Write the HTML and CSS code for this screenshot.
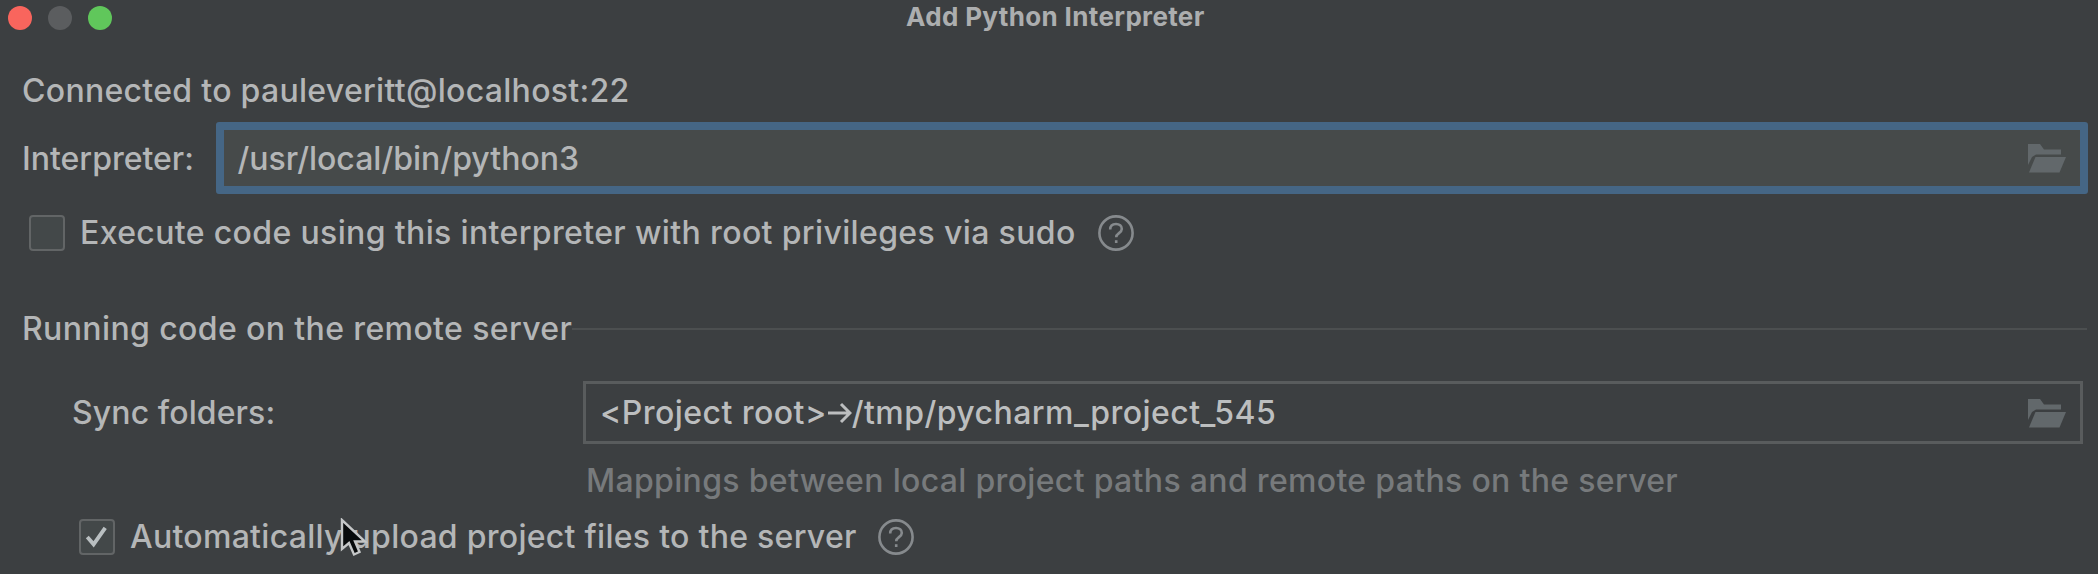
FILE: index.html
```html
<!DOCTYPE html>
<html lang="en">
<head>
<meta charset="utf-8">
<title>Add Python Interpreter</title>
<link rel="stylesheet" href="styles.css">
</head>
<body>
<svg class="defs" width="0" height="0">
  <symbol id="folder" viewBox="0 0 38 29">
    <path d="M0 0H12L16 5.500H33V10.500H8L4 13L0 21Z"/>
    <path d="M7.500 13H38L31.500 28.500H1Z"/>
  </symbol>
  <symbol id="help" viewBox="0 0 36 36">
    <circle cx="18" cy="18" r="16.600"/>
    <path d="M12.200 14.600C12.200 10.800 14.600 9 18 9C21.400 9 23.800 11 23.800 13.900C23.800 18 18.200 18.200 18.200 22.200"/>
    <path d="M18.200 25.200V28"/>
  </symbol>
</svg>
<main class="dialog">
  <header class="titlebar">
    <div class="lights"><i class="light red"></i><i class="light gray"></i><i class="light green"></i></div>
    <h1 class="title">Add Python Interpreter</h1>
  </header>
  <p class="text connected">Connected to pauleveritt@localhost:22</p>
  <div class="row interpreter">
    <label class="text lbl">Interpreter:</label>
    <div class="field focused"><span class="text path">/usr/local/bin/python3</span><svg class="folder"><use href="#folder"/></svg></div>
  </div>
  <div class="row sudo">
    <span class="check"></span>
    <span class="text sudo-text">Execute code using this interpreter with root privileges via sudo</span>
    <svg class="help"><use href="#help"/></svg>
  </div>
  <div class="row section"><h2 class="text section-text">Running code on the remote server</h2><span class="rule"></span></div>
  <div class="row sync">
    <label class="text sync-label">Sync folders:</label>
    <div class="field"><span class="text mapping">&lt;Project root&gt;<svg class="arrow" viewBox="0 0 25 22"><path d="M1 11H23M14 2L23 11L14 20"/></svg>/tmp/pycharm_project_545</span><svg class="folder"><use href="#folder"/></svg></div>
  </div>
  <p class="text hint">Mappings between local project paths and remote paths on the server</p>
  <div class="row upload">
    <span class="check"><svg class="tick" viewBox="0 0 32 32"><path d="M6.500 16.500L13 24L25 7"/></svg></span>
    <span class="text upload-text">Automatically upload project files to the server</span>
    <svg class="help"><use href="#help"/></svg>
  </div>
  <svg class="cursor" viewBox="0 0 28 40"><path d="M2 2V31L9 25L14 36.500L19.500 34L15 23.500H25Z"/></svg>
</main>
</body>
</html>
```
FILE: styles.css
```css
* { box-sizing: border-box; margin: 0; padding: 0; }
body { background: #3c3f41; overflow: hidden; }
.defs { display: block; height: 0; }
.dialog {
  position: relative;
  width: 2098px;
  height: 574px;
  overflow: hidden;
  background: #3c3f41;
  color: #b4b6b7;
  font-family: Inter, "Liberation Sans", sans-serif;
}
.titlebar { display: grid; grid-template-columns: 906px auto; height: 36px; }
.lights { display: flex; gap: 15.500px; padding: 5.500px 0 0 7.500px; }
.light { width: 24.500px; height: 24.500px; border-radius: 50%; }
.red { background: #f9655d; }
.gray { background: #5b5d5f; }
.green { background: #60c75b; }
.title { font-size: 26px; font-weight: 700; line-height: 32px; padding-top: 1px; white-space: nowrap; letter-spacing: 0.35px; color: #acaeaf; }
.text { font-size: 32px; font-weight: 450; line-height: 40px; white-space: nowrap; letter-spacing: 0.36px; }
.row { display: flex; align-items: center; }
.connected { margin-top: 35px; padding-left: 22px; letter-spacing: 0.3px; }
.interpreter { height: 72px; margin-top: 10.500px; padding: 0 10.500px 0 22px; }
.lbl { width: 194px; padding-top: 2px; letter-spacing: 0; }
.field { display: flex; align-items: center; justify-content: space-between; flex: 1; height: 63px; border: 3px solid #595c5d; padding: 0 14px 0 14px; }
.focused { height: 72px; border: 8px solid #456685; border-radius: 3px; background: #464a4a; padding: 0 13.500px; }
.path { padding-top: 2px; letter-spacing: 0; }
.folder { width: 38px; height: 29px; margin-top: 2px; fill: #62686b; }
.sudo { height: 36px; margin-top: 21px; padding-left: 29px; }
.check { width: 36px; height: 36px; border: 2.500px solid #626566; border-radius: 4px; background: #434849; }
.sudo-text { margin-left: 15px; width: 1018px; }
.help { width: 36px; height: 36px; fill: none; stroke: #868a8d; stroke-width: 2.600; }
.section { height: 40px; margin-top: 58px; padding: 0 11px 0 22px; }
.section-text { width: 550px; padding-top: 1px; letter-spacing: 0.38px; }
.rule { flex: 1; height: 2px; background: #4c4f50; }
.sync { height: 63px; margin-top: 32px; padding: 0 15px 0 72px; }
.sync-label { width: 511px; padding-top: 2px; letter-spacing: 0.1px; }
.mapping { display: flex; align-items: center; padding-top: 2px; letter-spacing: 0.45px; color: #bcbebf; }
.arrow { width: 25px; height: 22px; fill: none; stroke: #bcbebf; stroke-width: 3; }
.hint { margin: 17px 0 0 586px; letter-spacing: 0.32px; color: #777a7c; }
.upload { height: 36px; margin-top: 18.500px; padding-left: 79px; }
.tick { display: block; width: 31px; height: 31px; fill: none; stroke: #b9bfc1; stroke-width: 4; }
.upload-text { margin-left: 15px; width: 748px; letter-spacing: 0.28px; }
.cursor { position: absolute; left: 340px; top: 518px; width: 28px; height: 40px; fill: #080a0b; stroke: #c5c7c8; stroke-width: 2.400; }
```
